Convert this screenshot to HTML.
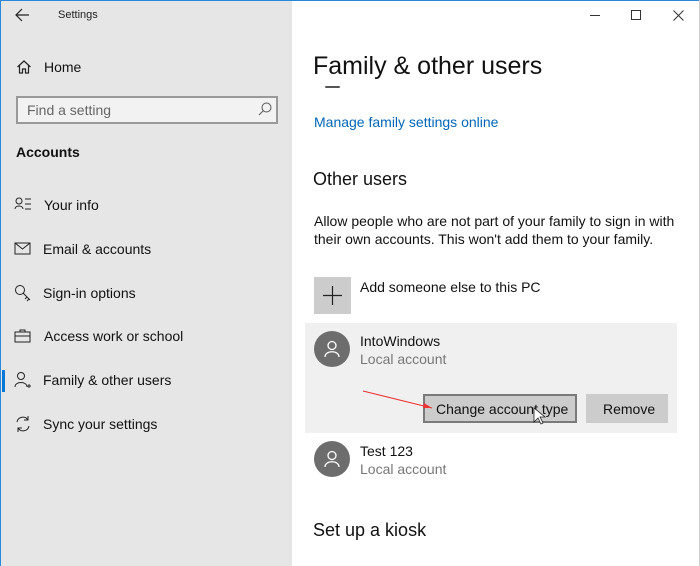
<!DOCTYPE html>
<html><head><style>
*{margin:0;padding:0;box-sizing:border-box}
body{width:700px;height:566px;overflow:hidden;font-family:"Liberation Sans",sans-serif;background:#fff;position:relative;color:#000}
.a{position:absolute;white-space:nowrap}
#side{position:absolute;left:0;top:0;width:292px;height:566px;background:#e6e6e6}
.it{font-size:14px;color:#111}
.av{position:absolute;width:36px;height:36px;border-radius:50%;background:#6d6d6d}
</style></head><body>
<div id="side"></div>
<div class="a" style="left:0;top:0;width:700px;height:1px;background:#2b88d8"></div>
<div class="a" style="left:0;top:0;width:1px;height:566px;background:#2b88d8"></div>
<div class="a" style="left:699px;top:0;width:1px;height:566px;background:#cfcfcf"></div>
<svg class="a" style="left:15px;top:8px" width="16" height="14"><path d="M1 7H14M7 1L1 7L7 13" stroke="#222" fill="none" stroke-width="1.2"/></svg>
<div class="a" style="left:58px;top:9px;font-size:11px;color:#222">Settings</div>
<svg class="a" style="left:16px;top:59px" width="16" height="16"><path d="M1.5 8L8 2L14.5 8M3.5 6.5V14H6.5V10H9.5V14H12.5V6.5" stroke="#222" fill="none" stroke-width="1.2"/></svg>
<div class="a it" style="left:44px;top:59px;font-size:14px">Home</div>
<div class="a" style="left:16px;top:96px;width:262px;height:28px;border:2px solid #999;background:#f2f2f2"></div>
<div class="a" style="left:27px;top:102px;font-size:14px;color:#666">Find a setting</div>
<svg class="a" style="left:257px;top:101px" width="16" height="16"><circle cx="9.5" cy="6.5" r="4.5" stroke="#555" fill="none"/><path d="M6.3 9.7L2 14" stroke="#555"/></svg>
<div class="a" style="left:16px;top:144px;font-size:14px;font-weight:bold;color:#111">Accounts</div>
<div class="a" style="left:2px;top:370px;width:3px;height:22px;background:#0078d7"></div>
<svg class="a" style="left:14px;top:196px" width="18" height="18"><circle cx="5" cy="5" r="3" stroke="#222" fill="none"/><path d="M1 13C1 9 9 9 9 13M11 3H17M11 8H17M11 13H17" stroke="#222" fill="none"/></svg>
<div class="a it" style="left:44px;top:197px">Your info</div>
<svg class="a" style="left:14px;top:242px" width="18" height="14"><rect x="1" y="1" width="15" height="11" stroke="#222" fill="none"/><path d="M1 1L8.5 7L16 1" stroke="#222" fill="none"/></svg>
<div class="a it" style="left:43px;top:241px">Email &amp; accounts</div>
<svg class="a" style="left:14px;top:284px" width="18" height="18"><circle cx="6" cy="6" r="4.5" stroke="#222" fill="none"/><path d="M9 9L16 16M13 13L11 15M15 15L13 17" stroke="#222" fill="none"/></svg>
<div class="a it" style="left:43px;top:285px">Sign-in options</div>
<svg class="a" style="left:14px;top:328px" width="18" height="16"><rect x="1" y="4" width="15" height="10" stroke="#222" fill="none"/><path d="M6 4V2H11V4M1 8H16" stroke="#222" fill="none"/></svg>
<div class="a it" style="left:44px;top:328px">Access work or school</div>
<svg class="a" style="left:14px;top:371px" width="18" height="18"><circle cx="7" cy="5" r="3.5" stroke="#222" fill="none"/><path d="M1 16C1 10 13 10 13 16M15 13V17M13 15H17" stroke="#222" fill="none"/></svg>
<div class="a it" style="left:43px;top:372px">Family &amp; other users</div>
<svg class="a" style="left:14px;top:415px" width="18" height="18"><path d="M3 7A6 6 0 0 1 14 5M15 11A6 6 0 0 1 4 13M14 1V5H10M4 17V13H8" stroke="#222" fill="none"/></svg>
<div class="a it" style="left:43px;top:416px">Sync your settings</div>

<div class="a" style="left:590px;top:15px;width:10px;height:1px;background:#333"></div>
<div class="a" style="left:631px;top:10px;width:10px;height:10px;border:1px solid #333"></div>
<svg class="a" style="left:673px;top:10px" width="11" height="11"><path d="M0.5 0.5L10.5 10.5M10.5 0.5L0.5 10.5" stroke="#333"/></svg>
<div class="a" style="left:313px;top:52px;font-size:25px;color:#111;font-weight:300">Family &amp; other users</div>
<div class="a" style="left:325px;top:86px;width:15px;height:2px;background:#555;border-radius:2px"></div>
<div class="a" style="left:314px;top:114px;font-size:14px;color:#0067b8">Manage family settings online</div>
<div class="a" style="left:313px;top:169px;font-size:18px;color:#111">Other users</div>
<div class="a" style="left:314px;top:212px;font-size:14px;color:#111;line-height:18px">Allow people who are not part of your family to sign in with<br>their own accounts. This won't add them to your family.</div>
<div class="a" style="left:314px;top:277px;width:37px;height:37px;background:#ccc"></div>
<svg class="a" style="left:322px;top:285px" width="21" height="21"><path d="M10.5 1V20M1 10.5H20" stroke="#222" stroke-width="1.2"/></svg>
<div class="a it" style="left:360px;top:279px">Add someone else to this PC</div>
<div class="a" style="left:305px;top:323px;width:372px;height:110px;background:#f0f0f0"></div>
<div class="av" style="left:314px;top:331px"></div>
<svg class="a" style="left:322px;top:339px" width="20" height="20"><circle cx="10" cy="6.5" r="4" stroke="#fff" fill="none" stroke-width="1.3"/><path d="M3 18C3 11 17 11 17 18" stroke="#fff" fill="none" stroke-width="1.3"/></svg>
<div class="a it" style="left:360px;top:333px">IntoWindows</div>
<div class="a" style="left:360px;top:351px;font-size:14px;color:#777">Local account</div>
<div class="a" style="left:423px;top:394px;width:154px;height:29px;background:#ccc;border:2px solid #7a7a7a"></div>
<div class="a it" style="left:436px;top:401px">Change account type</div>
<div class="a" style="left:586px;top:394px;width:82px;height:29px;background:#ccc"></div>
<div class="a it" style="left:603px;top:401px">Remove</div>
<svg class="a" style="left:360px;top:388px" width="200" height="40"><path d="M3 3L72 20" stroke="#e33" stroke-width="1"/><path d="M72 20L64 15L63 20Z" fill="#e33"/><path d="M174 20V34L178 30L181 36L183 35L180 29L185 29Z" fill="#fff" stroke="#222" stroke-width="0.8"/></svg>
<div class="av" style="left:314px;top:441px"></div>
<svg class="a" style="left:322px;top:449px" width="20" height="20"><circle cx="10" cy="6.5" r="4" stroke="#fff" fill="none" stroke-width="1.3"/><path d="M3 18C3 11 17 11 17 18" stroke="#fff" fill="none" stroke-width="1.3"/></svg>
<div class="a it" style="left:360px;top:443px">Test 123</div>
<div class="a" style="left:360px;top:461px;font-size:14px;color:#777">Local account</div>
<div class="a" style="left:313px;top:520px;font-size:18px;color:#111">Set up a kiosk</div>
</body></html>
